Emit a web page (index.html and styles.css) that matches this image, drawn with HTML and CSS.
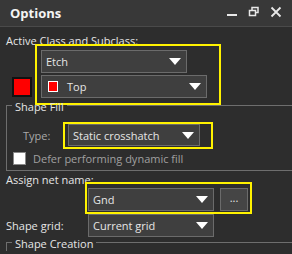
FILE: index.html
```html
<!DOCTYPE html>
<html lang="en">
<head>
    <meta charset="UTF-8">
    <title>Options</title>
    <link rel="stylesheet" href="styles.css">
</head>
<body>

    <div class="titlebar">
        <span class="title">Options</span>
        <div class="win-btns">
            <svg width="12" height="12" viewBox="0 0 12 12"><rect x="1" y="8" width="10" height="2" fill="#e8e8e8"/></svg>
            <svg width="12" height="12" viewBox="0 0 12 12" fill="none" stroke="#e8e8e8" stroke-width="1.5"><rect x="4" y="1.5" width="6" height="5"/><rect x="1.5" y="4.5" width="6" height="5" fill="#383838"/></svg>
            <svg width="12" height="12" viewBox="0 0 12 12" stroke="#e8e8e8" stroke-width="1.8"><path d="M1.5 1.5l9 9M10.5 1.5l-9 9"/></svg>
        </div>
    </div>

    <div class="panel">
        <div class="lbl lbl-first">Active Class and Subclass:</div>
        <div class="class-row">
            <div class="swatch"></div>
            <div class="hl hl-class">
                <div class="combo combo-etch">Etch<span class="arrow"></span></div>
                <div class="combo combo-top"><span class="mini-swatch"></span>Top<span class="arrow"></span></div>
            </div>
        </div>

        <fieldset class="group">
            <legend>Shape Fill</legend>
            <div class="type-row">
                <span class="type-lbl">Type:</span>
                <div class="hl hl-type">
                    <div class="combo combo-type">Static crosshatch<span class="arrow"></span></div>
                </div>
            </div>
            <div class="check-row">
                <span class="check"></span>
                <span class="dim">Defer performing dynamic fill</span>
            </div>
        </fieldset>

        <div class="lbl lbl-net">Assign net name:</div>
        <div class="net-row">
            <div class="hl hl-net">
                <div class="combo combo-net">Gnd<span class="arrow"></span></div>
                <div class="dots">...</div>
            </div>
        </div>
        <div class="grid-row">
            <span class="grid-lbl">Shape grid:</span>
            <div class="combo combo-net">Current grid<span class="arrow"></span></div>
        </div>

        <fieldset class="group group-last">
            <legend>Shape Creation</legend>
        </fieldset>
    </div>

</body>
</html>
```

FILE: styles.css
```css
/* options panel, dark theme */
:root {
    --bg: #2d2d2d; --bar: #383838; --field: #3f3f3f;
    --edge: #6b6b6b; --text: #e6e6e6; --hl: #fff200;
}
body { background: var(--bg); color: var(--text); font-family: 'Open Sans', 'Noto Sans', sans-serif; font-size: 11px; margin: 0; overflow: hidden; height: 254px; }

.titlebar { height: 26px; background: var(--bar); border-bottom: 1px solid #4a4a4a; display: flex; align-items: center; justify-content: space-between; padding: 0 10px 0 10px; }
.title { font-weight: bold; font-size: 13px; color: #f4f4f4; }
.win-btns { display: flex; gap: 10px; margin-top: -2px; }

.panel { padding-left: 6px; }
.lbl { line-height: 16px; }
.lbl-first { margin-top: 6px; }

.class-row { display: flex; align-items: flex-end; margin-top: -5px; }
.swatch { width: 16px; height: 16px; background: #ff0000; border: 2px solid #111; margin: 0 0 8px 6px; }

.hl { border: 2px solid var(--hl); }
.hl-class { width: 178px; padding: 4px 0 5px 4px; display: flex; flex-direction: column; gap: 2px; margin-left: 3px; }

.combo { position: relative; height: 23px; line-height: 21px; background: var(--field); border: 1px solid var(--edge); padding-left: 4px; box-sizing: border-box; }
.combo-etch { width: 146px; }
.combo-top { width: 166px; padding-left: 6px; display: flex; align-items: center; }
.arrow { position: absolute; right: 5px; top: 7px; width: 0; height: 0; border-left: 6px solid transparent; border-right: 6px solid transparent; border-top: 7px solid #fff; }
.mini-swatch { width: 8px; height: 9px; background: #ff0000; border: 1px solid #fff; margin-right: 9px; }

.group { margin: -8px 0 0 0; border: 1px solid #6e6e6e; border-right: none; padding: 0 0 5px 5px; }
.group legend { padding: 3px 3px 0; line-height: 14px; }
.type-row { display: flex; align-items: center; margin-top: 8px; }
.type-lbl { color: #a9a9a9; margin-left: 11px; width: 40px; }
.hl-type { width: 143px; padding: 0 0 1px 3px; }
.combo-type { width: 132px; height: 22px; }
.check-row { display: flex; align-items: center; height: 13px; margin-top: 3px; }
.check { width: 11px; height: 11px; background: #fff; border: 1px solid #888; margin: 0 7px 0 1px; }
.dim { color: #a0a0a0; line-height: 13px; }

.lbl-net { margin-top: 1px; }
.net-row { display: flex; margin: -6px 0 0 79px; }
.hl-net { display: flex; gap: 6px; width: 162px; padding: 4px 0 1px 1px; overflow: hidden; }
.combo-net { width: 126px; }
.dots { width: 28px; height: 23px; background: #454545; border: 1px solid var(--edge); box-sizing: border-box; text-align: center; line-height: 18px; }

.grid-row { display: flex; align-items: center; }
.grid-lbl { width: 82px; }
.group-last { margin-top: -3px; border-bottom: none; padding-bottom: 0; }
```
